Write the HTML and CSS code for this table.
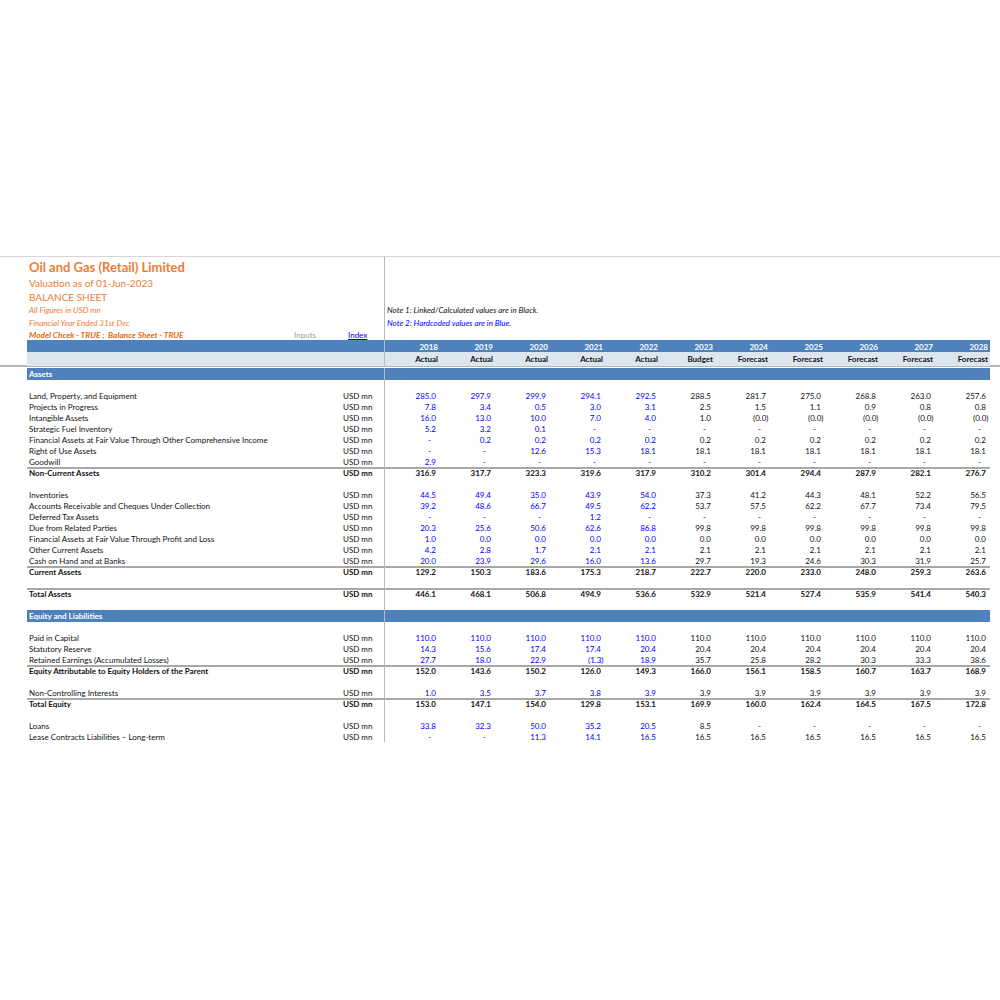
FILE: index.html
```html
<!DOCTYPE html>
<html>
<head>
<meta charset="utf-8">
<title>Balance Sheet</title>
<link rel="stylesheet" href="styles.css">
</head>
<body>
<div class="sheet">
  <div class="topline"></div>

  <div class="r h18"><span></span><span class="l title">Oil and Gas (Retail) Limited</span><span class="u"></span></div>
  <div class="r h14"><span></span><span class="l sub">Valuation as of 01-Jun-2023</span><span class="u"></span></div>
  <div class="r h14"><span></span><span class="l sub">BALANCE SHEET</span><span class="u"></span></div>
  <div class="r h13"><span></span><span class="l note-o">All Figures in USD mn</span><span class="u"></span><span class="rest note-k">Note 1: Linked/Calculated values are in Black.</span></div>
  <div class="r h12"><span></span><span class="l note-o">Financial Year Ended 31st Dec</span><span class="u"></span><span class="rest note-b">Note 2: Hardcoded values are in Blue.</span></div>
  <div class="r h12"><span></span><span class="l check"><span class="chk">Model Chcek - TRUE ;&nbsp; Balance Sheet - TRUE</span><span class="inputs">Inputs</span></span><span class="u"><a class="index" href="#">Index</a></span></div>

  <div class="r h12 bar yr"><span></span><span class="l"></span><span class="u"></span><span class="hd">2018</span><span class="hd">2019</span><span class="hd">2020</span><span class="hd">2021</span><span class="hd">2022</span><span class="hd">2023</span><span class="hd">2024</span><span class="hd">2025</span><span class="hd">2026</span><span class="hd">2027</span><span class="hd">2028</span></div>
  <div class="r h13 light"><span></span><span class="l"></span><span class="u"></span><span class="hd">Actual</span><span class="hd">Actual</span><span class="hd">Actual</span><span class="hd">Actual</span><span class="hd">Actual</span><span class="hd">Budget</span><span class="hd">Forecast</span><span class="hd">Forecast</span><span class="hd">Forecast</span><span class="hd">Forecast</span><span class="hd">Forecast</span></div>
  <div class="frz"></div>

  <div class="r bar sec"><span></span><span class="l">Assets</span><span class="u"></span><span></span><span></span><span></span><span></span><span></span><span></span><span></span><span></span><span></span><span></span><span></span></div>
  <div class="r"><span></span><span></span><span class="u"></span></div>

  <div class="r"><span></span><span class="l">Land, Property, and Equipment</span><span class="u">USD mn</span><span class="n i">285.0</span><span class="n i">297.9</span><span class="n i">299.9</span><span class="n i">294.1</span><span class="n i">292.5</span><span class="n">288.5</span><span class="n">281.7</span><span class="n">275.0</span><span class="n">268.8</span><span class="n">263.0</span><span class="n">257.6</span></div>
  <div class="r"><span></span><span class="l">Projects in Progress</span><span class="u">USD mn</span><span class="n i">7.8</span><span class="n i">3.4</span><span class="n i">0.5</span><span class="n i">3.0</span><span class="n i">3.1</span><span class="n">2.5</span><span class="n">1.5</span><span class="n">1.1</span><span class="n">0.9</span><span class="n">0.8</span><span class="n">0.8</span></div>
  <div class="r"><span></span><span class="l">Intangible Assets</span><span class="u">USD mn</span><span class="n i">16.0</span><span class="n i">13.0</span><span class="n i">10.0</span><span class="n i">7.0</span><span class="n i">4.0</span><span class="n">1.0</span><span class="n ng">(0.0)</span><span class="n ng">(0.0)</span><span class="n ng">(0.0)</span><span class="n ng">(0.0)</span><span class="n ng">(0.0)</span></div>
  <div class="r"><span></span><span class="l">Strategic Fuel Inventory</span><span class="u">USD mn</span><span class="n i">5.2</span><span class="n i">3.2</span><span class="n i">0.1</span><span class="n i d">-</span><span class="n i d">-</span><span class="n d">-</span><span class="n d">-</span><span class="n d">-</span><span class="n d">-</span><span class="n d">-</span><span class="n d">-</span></div>
  <div class="r"><span></span><span class="l">Financial Assets at Fair Value Through Other Comprehensive Income</span><span class="u">USD mn</span><span class="n i d">-</span><span class="n i">0.2</span><span class="n i">0.2</span><span class="n i">0.2</span><span class="n i">0.2</span><span class="n">0.2</span><span class="n">0.2</span><span class="n">0.2</span><span class="n">0.2</span><span class="n">0.2</span><span class="n">0.2</span></div>
  <div class="r"><span></span><span class="l">Right of Use Assets</span><span class="u">USD mn</span><span class="n i d">-</span><span class="n i d">-</span><span class="n i">12.6</span><span class="n i">15.3</span><span class="n i">18.1</span><span class="n">18.1</span><span class="n">18.1</span><span class="n">18.1</span><span class="n">18.1</span><span class="n">18.1</span><span class="n">18.1</span></div>
  <div class="r"><span></span><span class="l">Goodwill</span><span class="u">USD mn</span><span class="n i">2.9</span><span class="n i d">-</span><span class="n i d">-</span><span class="n i d">-</span><span class="n i d">-</span><span class="n d">-</span><span class="n d">-</span><span class="n d">-</span><span class="n d">-</span><span class="n d">-</span><span class="n d">-</span></div>
  <div class="r tot"><span></span><span class="l">Non-Current Assets</span><span class="u">USD mn</span><span class="n">316.9</span><span class="n">317.7</span><span class="n">323.3</span><span class="n">319.6</span><span class="n">317.9</span><span class="n">310.2</span><span class="n">301.4</span><span class="n">294.4</span><span class="n">287.9</span><span class="n">282.1</span><span class="n">276.7</span></div>
  <div class="r"><span></span><span></span><span class="u"></span></div>

  <div class="r"><span></span><span class="l">Inventories</span><span class="u">USD mn</span><span class="n i">44.5</span><span class="n i">49.4</span><span class="n i">35.0</span><span class="n i">43.9</span><span class="n i">54.0</span><span class="n">37.3</span><span class="n">41.2</span><span class="n">44.3</span><span class="n">48.1</span><span class="n">52.2</span><span class="n">56.5</span></div>
  <div class="r"><span></span><span class="l">Accounts Receivable and Cheques Under Collection</span><span class="u">USD mn</span><span class="n i">39.2</span><span class="n i">48.6</span><span class="n i">66.7</span><span class="n i">49.5</span><span class="n i">62.2</span><span class="n">53.7</span><span class="n">57.5</span><span class="n">62.2</span><span class="n">67.7</span><span class="n">73.4</span><span class="n">79.5</span></div>
  <div class="r"><span></span><span class="l">Deferred Tax Assets</span><span class="u">USD mn</span><span class="n i d">-</span><span class="n i d">-</span><span class="n i d">-</span><span class="n i">1.2</span><span class="n i d">-</span><span class="n d">-</span><span class="n d">-</span><span class="n d">-</span><span class="n d">-</span><span class="n d">-</span><span class="n d">-</span></div>
  <div class="r"><span></span><span class="l">Due from Related Parties</span><span class="u">USD mn</span><span class="n i">20.3</span><span class="n i">25.6</span><span class="n i">50.6</span><span class="n i">62.6</span><span class="n i">86.8</span><span class="n">99.8</span><span class="n">99.8</span><span class="n">99.8</span><span class="n">99.8</span><span class="n">99.8</span><span class="n">99.8</span></div>
  <div class="r"><span></span><span class="l">Financial Assets at Fair Value Through Profit and Loss</span><span class="u">USD mn</span><span class="n i">1.0</span><span class="n i">0.0</span><span class="n i">0.0</span><span class="n i">0.0</span><span class="n i">0.0</span><span class="n">0.0</span><span class="n">0.0</span><span class="n">0.0</span><span class="n">0.0</span><span class="n">0.0</span><span class="n">0.0</span></div>
  <div class="r"><span></span><span class="l">Other Current Assets</span><span class="u">USD mn</span><span class="n i">4.2</span><span class="n i">2.8</span><span class="n i">1.7</span><span class="n i">2.1</span><span class="n i">2.1</span><span class="n">2.1</span><span class="n">2.1</span><span class="n">2.1</span><span class="n">2.1</span><span class="n">2.1</span><span class="n">2.1</span></div>
  <div class="r"><span></span><span class="l">Cash on Hand and at Banks</span><span class="u">USD mn</span><span class="n i">20.0</span><span class="n i">23.9</span><span class="n i">29.6</span><span class="n i">16.0</span><span class="n i">13.6</span><span class="n">29.7</span><span class="n">19.3</span><span class="n">24.6</span><span class="n">30.3</span><span class="n">31.9</span><span class="n">25.7</span></div>
  <div class="r tot"><span></span><span class="l">Current Assets</span><span class="u">USD mn</span><span class="n">129.2</span><span class="n">150.3</span><span class="n">183.6</span><span class="n">175.3</span><span class="n">218.7</span><span class="n">222.7</span><span class="n">220.0</span><span class="n">233.0</span><span class="n">248.0</span><span class="n">259.3</span><span class="n">263.6</span></div>
  <div class="r"><span></span><span></span><span class="u"></span></div>
  <div class="r tot"><span></span><span class="l">Total Assets</span><span class="u">USD mn</span><span class="n">446.1</span><span class="n">468.1</span><span class="n">506.8</span><span class="n">494.9</span><span class="n">536.6</span><span class="n">532.9</span><span class="n">521.4</span><span class="n">527.4</span><span class="n">535.9</span><span class="n">541.4</span><span class="n">540.3</span></div>
  <div class="r"><span></span><span></span><span class="u"></span></div>

  <div class="r bar sec"><span></span><span class="l">Equity and Liabilities</span><span class="u"></span><span></span><span></span><span></span><span></span><span></span><span></span><span></span><span></span><span></span><span></span><span></span></div>
  <div class="r"><span></span><span></span><span class="u"></span></div>

  <div class="r"><span></span><span class="l">Paid in Capital</span><span class="u">USD mn</span><span class="n i">110.0</span><span class="n i">110.0</span><span class="n i">110.0</span><span class="n i">110.0</span><span class="n i">110.0</span><span class="n">110.0</span><span class="n">110.0</span><span class="n">110.0</span><span class="n">110.0</span><span class="n">110.0</span><span class="n">110.0</span></div>
  <div class="r"><span></span><span class="l">Statutory Reserve</span><span class="u">USD mn</span><span class="n i">14.3</span><span class="n i">15.6</span><span class="n i">17.4</span><span class="n i">17.4</span><span class="n i">20.4</span><span class="n">20.4</span><span class="n">20.4</span><span class="n">20.4</span><span class="n">20.4</span><span class="n">20.4</span><span class="n">20.4</span></div>
  <div class="r"><span></span><span class="l">Retained Earnings (Accumulated Losses)</span><span class="u">USD mn</span><span class="n i">27.7</span><span class="n i">18.0</span><span class="n i">22.9</span><span class="n i ng">(1.3)</span><span class="n i">18.9</span><span class="n">35.7</span><span class="n">25.8</span><span class="n">28.2</span><span class="n">30.3</span><span class="n">33.3</span><span class="n">38.6</span></div>
  <div class="r tot"><span></span><span class="l">Equity Attributable to Equity Holders of the Parent</span><span class="u">USD mn</span><span class="n">152.0</span><span class="n">143.6</span><span class="n">150.2</span><span class="n">126.0</span><span class="n">149.3</span><span class="n">166.0</span><span class="n">156.1</span><span class="n">158.5</span><span class="n">160.7</span><span class="n">163.7</span><span class="n">168.9</span></div>
  <div class="r"><span></span><span></span><span class="u"></span></div>
  <div class="r"><span></span><span class="l">Non-Controlling Interests</span><span class="u">USD mn</span><span class="n i">1.0</span><span class="n i">3.5</span><span class="n i">3.7</span><span class="n i">3.8</span><span class="n i">3.9</span><span class="n">3.9</span><span class="n">3.9</span><span class="n">3.9</span><span class="n">3.9</span><span class="n">3.9</span><span class="n">3.9</span></div>
  <div class="r tot"><span></span><span class="l">Total Equity</span><span class="u">USD mn</span><span class="n">153.0</span><span class="n">147.1</span><span class="n">154.0</span><span class="n">129.8</span><span class="n">153.1</span><span class="n">169.9</span><span class="n">160.0</span><span class="n">162.4</span><span class="n">164.5</span><span class="n">167.5</span><span class="n">172.8</span></div>
  <div class="r"><span></span><span></span><span class="u"></span></div>
  <div class="r"><span></span><span class="l">Loans</span><span class="u">USD mn</span><span class="n i">33.8</span><span class="n i">32.3</span><span class="n i">50.0</span><span class="n i">35.2</span><span class="n i">20.5</span><span class="n">8.5</span><span class="n d">-</span><span class="n d">-</span><span class="n d">-</span><span class="n d">-</span><span class="n d">-</span></div>
  <div class="r"><span></span><span class="l">Lease Contracts Liabilities – Long-term</span><span class="u">USD mn</span><span class="n i d">-</span><span class="n i d">-</span><span class="n i">11.3</span><span class="n i">14.1</span><span class="n i">16.5</span><span class="n">16.5</span><span class="n">16.5</span><span class="n">16.5</span><span class="n">16.5</span><span class="n">16.5</span><span class="n">16.5</span></div>
</div>
</body>
</html>
```

FILE: styles.css
```css
* { box-sizing: border-box; margin: 0; padding: 0; }

body {
  margin: 0;
  background: #ffffff;
  font-family: Lato, "Liberation Sans", sans-serif;
  font-size: 8px;
  color: #111111;
}

.sheet {
  padding-top: 256px;
  width: 1000px;
}

.topline {
  height: 1px;
  background: #d6d6d6;
}

.r {
  display: grid;
  grid-template-columns: 27px 314px 44px repeat(11, 55px);
  height: 11px;
  line-height: 11px;
  white-space: nowrap;
}

.r > span {
  display: block;
  padding-top: 1px;
}

.h18 { height: 18px; line-height: 18px; }
.h14 { height: 14px; line-height: 14px; }
.h13 { height: 13px; line-height: 13px; }
.h12 { height: 12px; line-height: 12px; }

.r > .l { padding-left: 2px; }

.r > .u {
  padding-left: 2px;
  border-right: 1px solid #b9b9b9;
}

.r > .rest {
  grid-column: 4 / -1;
  padding-left: 2px;
}

.title {
  color: #ed7d31;
  font-size: 13px;
  font-weight: 700;
}

.sub {
  color: #ed7d31;
  font-size: 10px;
}

.note-o {
  color: #ed7d31;
  font-style: italic;
  font-size: 8px;
}

.note-k {
  color: #111111;
  font-style: italic;
  font-size: 8px;
}

.note-b {
  color: #0000ff;
  font-style: italic;
  font-size: 8px;
}

.r > .check {
  display: flex;
  justify-content: space-between;
  padding-right: 25px;
}

.chk {
  color: #e46c0a;
  font-weight: 700;
  font-style: italic;
  font-size: 8.3px;
}

.inputs { color: #9a9a9a; }

.index {
  color: #0000ee;
  text-decoration: underline;
  padding-left: 5px;
}

.bar > span:not(:first-child) {
  background: #4f81bd;
  color: #ffffff;
  font-weight: 700;
}

.light > span:not(:first-child) {
  background: #dce6f1;
  color: #111111;
  font-weight: 700;
}

.r > .hd {
  text-align: right;
  padding-right: 2px;
}

.frz {
  height: 2px;
  background: #b5b5b5;
  margin-bottom: 1px;
}

.r > .n {
  text-align: right;
  padding-right: 4px;
}

.r > .n.ng { padding-right: 1.5px; }
.r > .n.d { padding-right: 9px; }

.i { color: #0000ff; }

.tot { font-weight: 700; }

.tot > span:not(:first-child) {
  box-shadow: inset 0 2px 0 #a8a8a8;
}
```
